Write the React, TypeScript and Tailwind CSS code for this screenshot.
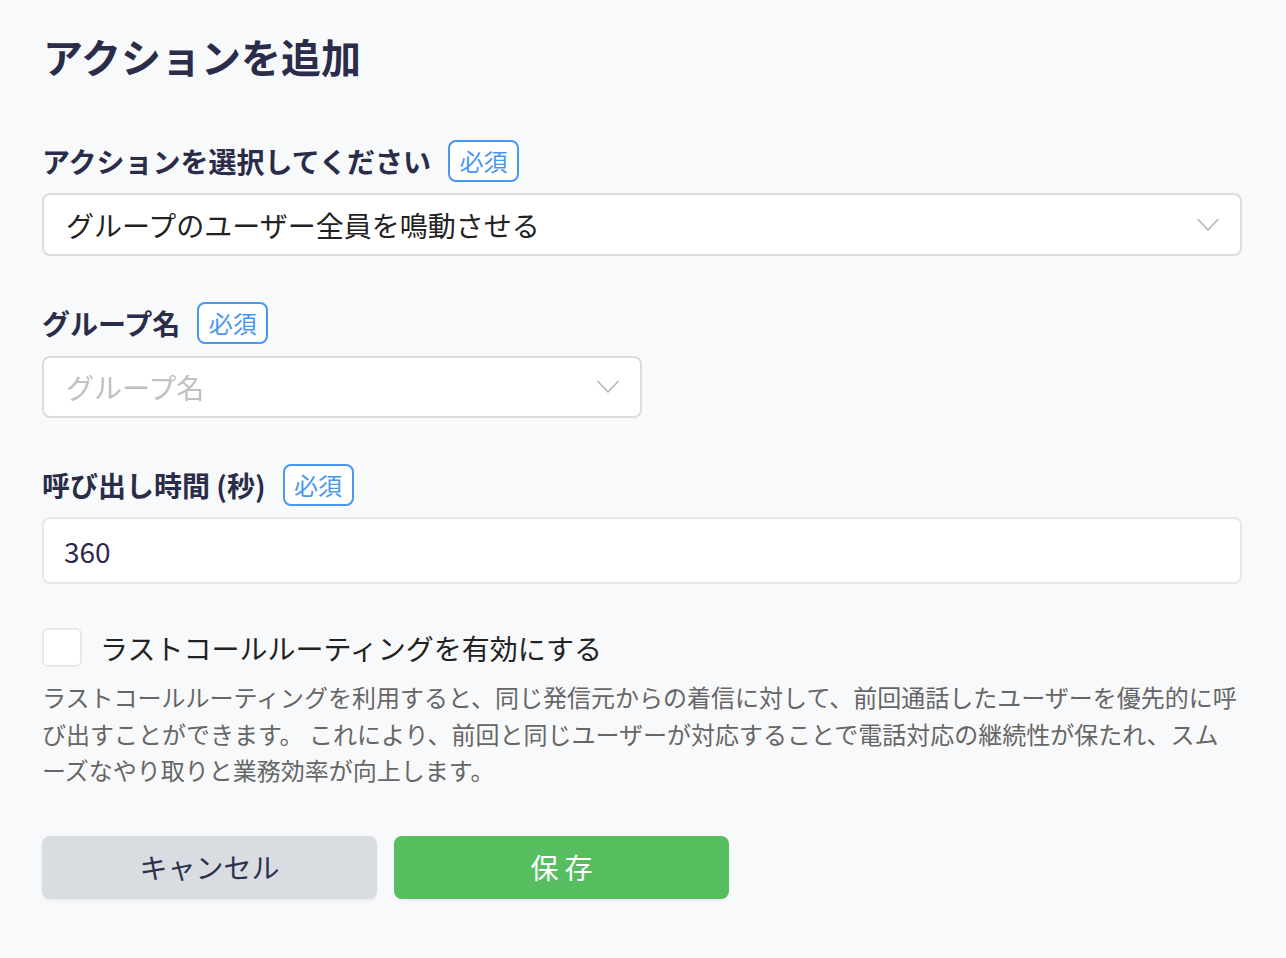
import React from "react";

const font = { fontFamily: '"Noto Sans CJK JP", "Noto Sans", sans-serif' };

const Badge = () => (
  <span className="h-[42px] w-[71px] flex items-center justify-center border-2 border-[#4a97ef] rounded-lg text-[24px] leading-none text-[#4a97ef] bg-white">
    必須
  </span>
);

const Chevron = () => (
  <svg width="22" height="14" viewBox="0 0 22 14" fill="none" className="shrink-0">
    <path d="M1 1.5 L11 12 L21 1.5" stroke="#b4b4b4" strokeWidth="1.6" strokeLinecap="round" strokeLinejoin="round" />
  </svg>
);

const Label = ({ text }: { text: string }) => (
  <div className="flex items-center gap-[17px] h-[42px]">
    <span className="text-[28px] font-bold leading-none text-[#2a2c48]">{text}</span>
    <Badge />
  </div>
);

export default function App() {
  return (
    <div className="min-h-[958px] w-full bg-[#f8f9fb] pl-[42px] pr-[44px] pt-[26px]" style={font}>
      <h1 className="text-[40px] font-bold leading-[60px] text-[#2b2c4a] pl-px">アクションを追加</h1>

      {/* Action */}
      <div className="mt-[54px]">
        <Label text="アクションを選択してください" />
        <div className="mt-[11px] h-[63px] bg-white border-2 border-[#dcdcdc] rounded-[8px] flex items-center justify-between pl-[22px] pr-[21px]">
          <span className="text-[28px] text-[#222222] leading-none">グループのユーザー全員を鳴動させる</span>
          <Chevron />
        </div>
      </div>

      {/* Group */}
      <div className="mt-[46px]">
        <Label text="グループ名" />
        <div className="mt-[12px] h-[62px] w-[600px] bg-white border-2 border-[#dcdcdc] rounded-[8px] flex items-center justify-between pl-[22px] pr-[21px]">
          <span className="text-[28px] text-[#c0c0c0] leading-none">グループ名</span>
          <Chevron />
        </div>
      </div>

      {/* Time */}
      <div className="mt-[46px]">
        <Label text="呼び出し時間 (秒)" />
        <div className="mt-[11px] h-[67px] bg-white border-2 border-[#e6e7ea] rounded-[8px] flex items-center pl-[20px]">
          <span className="text-[28px] text-[#2b2c4a] leading-none">360</span>
        </div>
      </div>

      {/* Checkbox */}
      <div className="mt-[44px] flex items-center gap-[18px]">
        <span className="w-[40px] h-[39px] bg-white border-2 border-[#e6e8ec] rounded-md shrink-0" />
        <span className="text-[28px] text-[#222222] leading-none">ラストコールルーティングを有効にする</span>
      </div>
      <p className="mt-[12px] text-[24px] leading-[36.5px] text-[#666666]">
        ラストコールルーティングを利用すると、同じ発信元からの着信に対して、前回通話したユーザーを優先的に呼び出すことができます。 これにより、前回と同じユーザーが対応することで電話対応の継続性が保たれ、スムーズなやり取りと業務効率が向上します。
      </p>

      {/* Buttons */}
      <div className="mt-[47px] flex gap-[17px]">
        <button className="h-[63px] w-[335px] rounded-[8px] bg-[#d9dde2] text-[28px] text-[#2d3150] shadow-[0_2px_3px_rgba(0,0,0,0.06)]">
          キャンセル
        </button>
        <button className="h-[63px] w-[335px] rounded-[8px] bg-[#56be5f] text-[28px] text-white tracking-[6px] pl-[6px] shadow-[0_2px_3px_rgba(0,0,0,0.06)]">
          保存
        </button>
      </div>
    </div>
  );
}
